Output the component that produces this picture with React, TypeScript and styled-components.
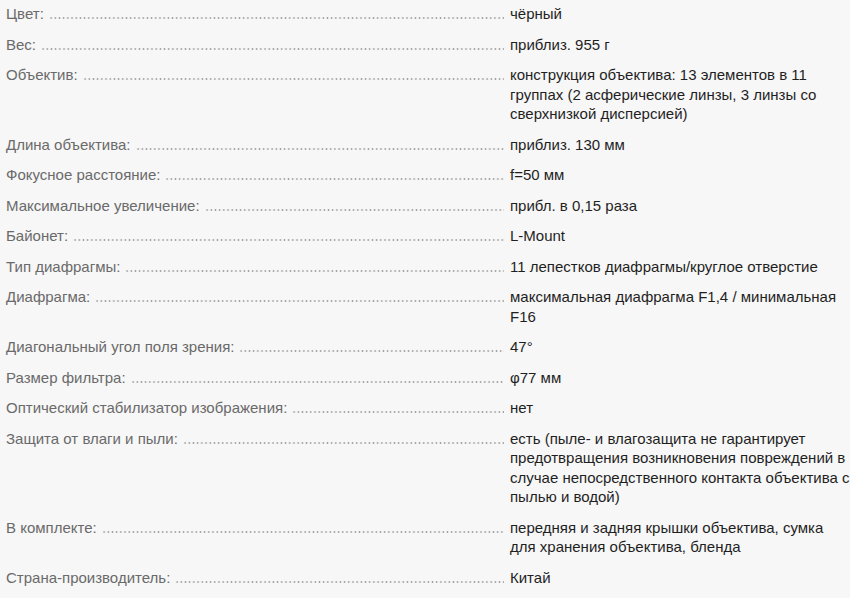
import { createGlobalStyle, styled } from "styled-components";

const specs = [
  { label: "Цвет", value: "чёрный" },
  { label: "Вес", value: "приблиз. 955 г" },
  {
    label: "Объектив",
    value:
      "конструкция объектива: 13 элементов в 11 группах (2 асферические линзы, 3 линзы со сверхнизкой дисперсией)",
  },
  { label: "Длина объектива", value: "приблиз. 130 мм" },
  { label: "Фокусное расстояние", value: "f=50 мм" },
  { label: "Максимальное увеличение", value: "прибл. в 0,15 раза" },
  { label: "Байонет", value: "L-Mount" },
  { label: "Тип диафрагмы", value: "11 лепестков диафрагмы/круглое отверстие" },
  { label: "Диафрагма", value: "максимальная диафрагма F1,4 / минимальная F16" },
  { label: "Диагональный угол поля зрения", value: "47°" },
  { label: "Размер фильтра", value: "φ77 мм" },
  { label: "Оптический стабилизатор изображения", value: "нет" },
  {
    label: "Защита от влаги и пыли",
    value:
      "есть (пыле- и влагозащита не гарантирует предотвращения возникновения повреждений в случае непосредственного контакта объектива с пылью и водой)",
  },
  {
    label: "В комплекте",
    value: "передняя и задняя крышки объектива, сумка для хранения объектива, бленда",
  },
  { label: "Страна-производитель", value: "Китай" },
];

const GlobalStyle = createGlobalStyle`
  html, body {
    margin: 0;
    padding: 0;
    background: #f7f7f7;
  }
  body {
    font-family: "Liberation Sans", Arial, Helvetica, sans-serif;
  }
`;

export default function App() {
  return (
    <>
      <GlobalStyle />
      <SpecList>
        {specs.map((item) => (
          <Row key={item.label}>
            <Term>
              <span>{item.label}:</span>
              <Leader />
            </Term>
            <Value>{item.value}</Value>
          </Row>
        ))}
      </SpecList>
    </>
  );
}

const SpecList = styled.dl`
  margin: 0;
  padding: 4px 0 0 6px;
  font-size: 15px;
  line-height: 19.5px;
`;

const Row = styled.div`
  display: grid;
  grid-template-columns: 498px 1fr;
  column-gap: 6px;
  margin-bottom: 11px;
`;

const Term = styled.dt`
  display: flex;
  align-items: baseline;
  color: #6a6a6a;
  white-space: nowrap;
`;

const Leader = styled.span`
  flex: 1;
  height: 2px;
  margin-left: 5px;
  background-image: radial-gradient(circle, #a0a0a0 0.7px, transparent 1.1px);
  background-size: 4.2px 2px;
  background-repeat: repeat-x;
`;

const Value = styled.dd`
  margin: 0;
  color: #1f1f1f;
`;
